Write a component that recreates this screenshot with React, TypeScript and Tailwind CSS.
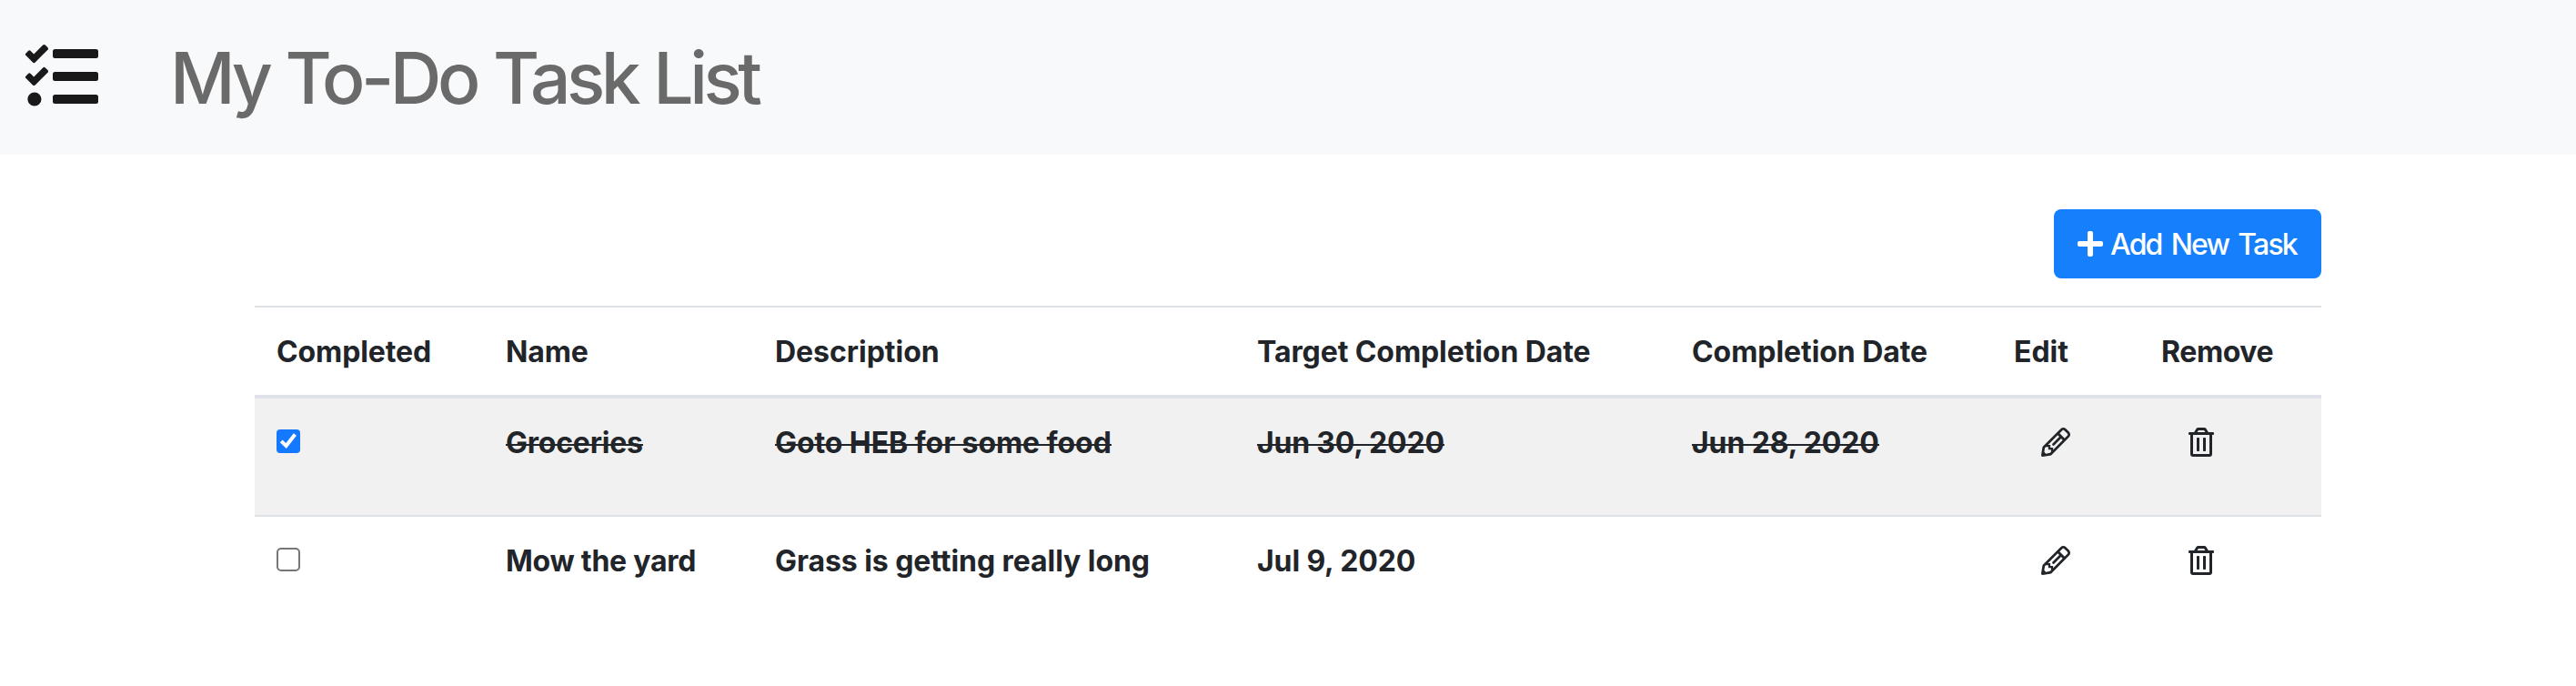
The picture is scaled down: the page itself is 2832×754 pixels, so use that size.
import React, { useState } from 'react';
import { FaPlus, FaRegTrashAlt, FaTasks } from 'react-icons/fa';

interface Cell {
  text: string;
  tracking: string;
}

interface Task {
  id: number;
  completed: boolean;
  name: Cell;
  description: Cell;
  target: Cell;
  finished: Cell | null;
}

const columns: { label: string; className: string }[] = [
  { label: 'Completed', className: 'w-[252px] tracking-[-0.11px]' },
  { label: 'Name', className: 'w-[296px] tracking-[-0.12px]' },
  { label: 'Description', className: 'w-[530px] tracking-[-0.03px]' },
  { label: 'Target Completion Date', className: 'w-[478px] tracking-[-0.09px]' },
  { label: 'Completion Date', className: 'w-[354px] tracking-[-0.07px]' },
  { label: 'Edit', className: 'w-[162px] tracking-[-0.05px]' },
  { label: 'Remove', className: 'w-[200px] tracking-[-0.4px]' },
];

const initialTasks: Task[] = [
  {
    id: 1,
    completed: true,
    name: { text: 'Groceries', tracking: 'tracking-[-0.22px]' },
    description: { text: 'Goto HEB for some food', tracking: 'tracking-[-0.08px]' },
    target: { text: 'Jun 30, 2020', tracking: 'tracking-[-0.2px]' },
    finished: { text: 'Jun 28, 2020', tracking: 'tracking-[-0.12px]' },
  },
  {
    id: 2,
    completed: false,
    name: { text: 'Mow the yard', tracking: 'tracking-[-0.24px]' },
    description: { text: 'Grass is getting really long', tracking: 'tracking-[-0.07px]' },
    target: { text: 'Jul 9, 2020', tracking: 'tracking-[-0.12px]' },
    finished: null,
  },
];

function PencilIcon() {
  return (
    <svg viewBox="0 0 512 512" className="block size-8" fill="currentColor" aria-hidden="true">
      <path d="M491.609 73.625l-53.861-53.839c-26.378-26.379-69.075-26.383-95.46-.001L24.91 335.089.329 484.085c-2.675 16.215 11.368 30.261 27.587 27.587l148.995-24.582 315.326-317.378c26.33-26.331 26.581-68.879-.628-96.087zM200.443 311.557C204.739 315.853 210.37 318 216 318s11.261-2.147 15.557-6.443l119.029-119.03 28.569 28.569L210 391.355V350h-48v-48h-41.356l170.259-169.155 28.569 28.569-119.03 119.029c-8.589 8.592-8.589 22.522.001 31.114zM82.132 458.132l-28.263-28.263 12.14-73.587L84.409 338H126v48h48v41.59l-18.282 18.401-73.586 12.141zm378.985-319.533l-.051.051-.051.051-48.03 48.344-88.03-88.03 48.344-48.03.05-.05.05-.05c9.147-9.146 23.978-9.259 33.236-.001l53.854 53.854c9.878 9.877 9.939 24.549.628 33.861z" />
    </svg>
  );
}

function Checkbox({ checked, onToggle }: { checked: boolean; onToggle: () => void }) {
  return (
    <button
      type="button"
      role="checkbox"
      aria-checked={checked}
      aria-label="Completed"
      onClick={onToggle}
      className={
        checked
          ? 'block size-[26px] rounded-[4px] bg-[#1479ff]'
          : 'block size-[26px] rounded-[5px] border-2 border-[#767676] bg-white'
      }
    >
      {checked && (
        <svg viewBox="0 0 26 26" className="block size-[26px]" fill="none" stroke="white" strokeWidth="4">
          <path d="M5.2 12.9 L10.6 18 L20.4 5.4" />
        </svg>
      )}
    </button>
  );
}

function TextCell({ cell, struck }: { cell: Cell | null; struck: boolean }) {
  return (
    <td className="px-6 pt-[25px] pb-[23px] whitespace-nowrap">
      {cell && (
        <span
          className={`inline-block h-12 align-top ${cell.tracking} ${
            struck
              ? 'bg-[linear-gradient(#212529,#212529)] bg-[length:100%_2px] bg-[position:0_25px] bg-no-repeat'
              : ''
          }`}
        >
          {cell.text}
        </span>
      )}
    </td>
  );
}

export default function App() {
  const [tasks, setTasks] = useState<Task[]>(initialTasks);

  const toggle = (id: number) =>
    setTasks((all) => all.map((t) => (t.id === id ? { ...t, completed: !t.completed } : t)));

  return (
    <div className="min-h-[754px] bg-white font-['Inter','Liberation_Sans',sans-serif] text-[32px] leading-[48px] text-[#212529]">
      <header className="flex h-[170px] items-center bg-[#f8f9fb] pl-7">
        <FaTasks className="-mt-0.5 size-20 shrink-0 text-[#191919]" />
        <h1 className="ml-[79px] pt-0.5 text-[78.5px] leading-[120px] font-[450] tracking-[-4.5px] whitespace-nowrap text-[#6a6a6a] [word-spacing:1.7px]">
          My To-Do Task List
        </h1>
      </header>

      <main className="mx-auto w-[2272px] pt-[60px]">
        <div className="flex justify-end">
          <button
            type="button"
            className="flex h-[76px] w-[294px] items-center rounded-lg bg-[#167ffc] pl-[26px] text-white"
          >
            <FaPlus className="h-8 w-7 shrink-0" />
            <span className="ml-2 pt-0.5 font-[450] tracking-[-1.8px] whitespace-nowrap [word-spacing:3.3px]">
              Add New Task
            </span>
          </button>
        </div>

        <table className="mt-[30px] w-[2272px] table-fixed border-separate border-spacing-0 text-left font-bold">
          <thead>
            <tr>
              {columns.map((c) => (
                <th
                  key={c.label}
                  className={`border-t-2 border-b-4 border-t-[#dee2e6] border-b-[#dee1e8] px-6 pt-[25px] pb-[23px] whitespace-nowrap ${c.className}`}
                >
                  {c.label}
                </th>
              ))}
            </tr>
          </thead>
          <tbody>
            {tasks.map((t, i) => (
              <tr
                key={t.id}
                className={
                  i % 2 === 0
                    ? 'h-32 bg-[#f1f1f1] align-top'
                    : 'h-[130px] align-top [&>td]:border-t-2 [&>td]:border-[#dee2e6]'
                }
              >
                <td className="px-6 pt-[34px]">
                  <Checkbox checked={t.completed} onToggle={() => toggle(t.id)} />
                </td>
                <TextCell cell={t.name} struck={t.completed} />
                <TextCell cell={t.description} struck={t.completed} />
                <TextCell cell={t.target} struck={t.completed} />
                <TextCell cell={t.finished} struck={t.completed} />
                <td className="pt-8 pl-[54px]">
                  <button type="button" aria-label="Edit" className="block">
                    <PencilIcon />
                  </button>
                </td>
                <td className="pt-8 pl-[54px]">
                  <button type="button" aria-label="Remove" className="block">
                    <FaRegTrashAlt className="block h-8 w-7" />
                  </button>
                </td>
              </tr>
            ))}
          </tbody>
        </table>
      </main>
    </div>
  );
}
